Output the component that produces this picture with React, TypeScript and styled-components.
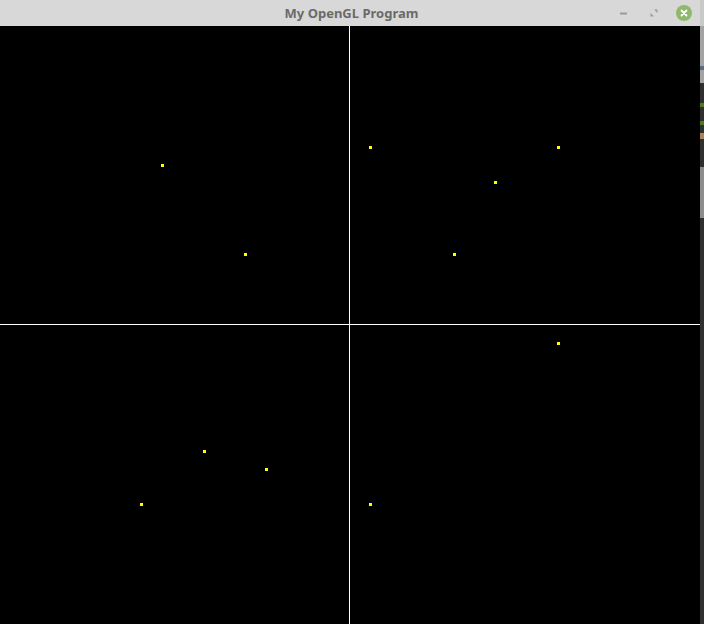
import React from "react";
import styled, { createGlobalStyle } from "styled-components";

const GlobalStyle = createGlobalStyle`
  html, body {
    margin: 0;
    padding: 0;
    background: #2b2b2b;
    overflow: hidden;
  }
`;

const Desktop = styled.div`
  display: flex;
  width: 704px;
  height: 624px;
`;

const Window = styled.div`
  display: flex;
  flex-direction: column;
  width: 700px;
  height: 624px;
`;

const TitleBar = styled.div`
  position: relative;
  height: 26px;
  display: flex;
  align-items: center;
  justify-content: center;
  background: #d8d8d8;
  font-family: "Noto Sans", "DejaVu Sans", sans-serif;
  font-weight: bold;
  font-size: 13px;
  color: #6a6a6a;
`;

const Title = styled.span`
  margin-left: 3px;
`;

const Controls = styled.div`
  position: absolute;
  right: 8px;
  top: 0;
  height: 25px;
  display: flex;
  align-items: center;
  gap: 14px;
`;

const CtrlButton = styled.div<{ $close?: boolean }>`
  width: 16px;
  height: 16px;
  display: flex;
  align-items: center;
  justify-content: center;
  border-radius: 50%;
  background: ${(p) => (p.$close ? "#8fb96a" : "transparent")};
`;

const Canvas = styled.div`
  flex: 1;
  display: grid;
  grid-template-columns: 349px 350px;
  grid-template-rows: 298px 299px;
  gap: 1px;
  background: #ffffff;
`;

const Viewport = styled.div`
  position: relative;
  background: #000000;
  overflow: hidden;
`;

const Point = styled.div`
  position: absolute;
  width: 3px;
  height: 3px;
  background: #ffff00;
`;

const Strip = styled.div`
  width: 4px;
  display: flex;
  flex-direction: column;
`;

const Band = styled.div<{ $h: number; $c: string }>`
  height: ${(p) => p.$h}px;
  background: ${(p) => p.$c};
  flex-shrink: 0;
`;

// point centres per viewport, in viewport coordinates
const viewports: [number, number][][] = [
  [
    [162, 139],
    [245, 228],
  ],
  [
    [20, 121],
    [208, 121],
    [145, 156],
    [104, 228],
  ],
  [
    [204, 126],
    [266, 144],
    [141, 179],
  ],
  [
    [208, 18],
    [20, 179],
  ],
];

// the sliver of desktop showing to the right of the window
const strip: [number, string][] = [
  [26, "#c9c9c9"],
  [40, "#a3a3a3"],
  [4, "#5b6b80"],
  [13, "#a3a3a3"],
  [20, "#2f2f2f"],
  [4, "#4f7a1c"],
  [14, "#2f2f2f"],
  [4, "#4f7a1c"],
  [8, "#2f2f2f"],
  [6, "#a8845c"],
  [28, "#2f2f2f"],
  [51, "#8c8c8c"],
  [406, "#2f2f2f"],
];

export default function App() {
  return (
    <>
      <GlobalStyle />
      <Desktop>
        <Window>
          <TitleBar>
            <Title>My OpenGL Program</Title>
            <Controls>
              <CtrlButton>
                <svg width="10" height="10" viewBox="0 0 10 10">
                  <rect x="1" y="4.5" width="7" height="2" fill="#9a9a9a" />
                </svg>
              </CtrlButton>
              <CtrlButton>
                <svg width="10" height="10" viewBox="0 0 10 10">
                  <path d="M5 1.5 H8.5 V5 Z" fill="#9a9a9a" />
                  <path d="M1.5 5 V8.5 H5 Z" fill="#9a9a9a" />
                </svg>
              </CtrlButton>
              <CtrlButton $close>
                <svg width="10" height="10" viewBox="0 0 10 10">
                  <path
                    d="M2.5 2.5 L7.5 7.5 M7.5 2.5 L2.5 7.5"
                    stroke="#ffffff"
                    strokeWidth="1.8"
                    strokeLinecap="round"
                  />
                </svg>
              </CtrlButton>
            </Controls>
          </TitleBar>
          <Canvas>
            {viewports.map((pts, i) => (
              <Viewport key={i}>
                {pts.map(([x, y], j) => (
                  <Point key={j} style={{ left: x - 1, top: y - 1 }} />
                ))}
              </Viewport>
            ))}
          </Canvas>
        </Window>
        <Strip>
          {strip.map(([h, c], i) => (
            <Band key={i} $h={h} $c={c} />
          ))}
        </Strip>
      </Desktop>
    </>
  );
}
